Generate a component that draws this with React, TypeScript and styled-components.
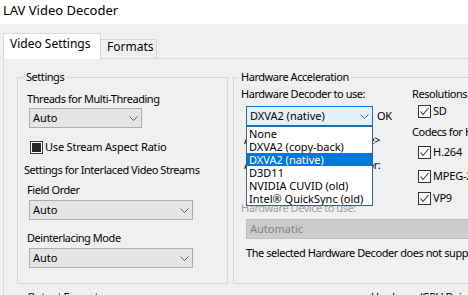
import React from "react";
import styled, { createGlobalStyle } from "styled-components";

const FONT = `"Noto Sans", "Noto Sans CJK SC", "Liberation Sans", sans-serif`;

const Global = createGlobalStyle`
  html, body { margin: 0; padding: 0; background: #f0f0f0; }
  body { font-family: ${FONT}; }
  * { box-sizing: border-box; }
`;

const Window = styled.div`
  width: 468px;
  height: 295px;
  overflow: hidden;
  background: #f0f0f0;
  font-family: ${FONT};
  font-size: 11px;
  letter-spacing: -0.45px;
  line-height: 16px;
  color: #000;
  display: flex;
  flex-direction: column;
`;

const TitleBar = styled.div`
  flex: none;
  height: 24px;
  background: #fff;
  display: flex;
  align-items: center;
  padding: 0 0 4px 3px;
  font-size: 13px;
  letter-spacing: 0;
`;

const TabArea = styled.div`
  flex: 1;
  display: flex;
  flex-direction: column;
  padding: 9px 0 0 3px;
`;

const TabStrip = styled.div`
  display: flex;
  align-items: flex-end;
  height: 26px;
  margin-bottom: -1px;
  position: relative;
  z-index: 1;
`;

const Tab = styled.div<{ $active?: boolean; $w: number }>`
  width: ${(p) => p.$w}px;
  height: ${(p) => (p.$active ? 26 : 20)}px;
  background: ${(p) => (p.$active ? "#ffffff" : "#f0f0f0")};
  border: 1px solid #d9d9d9;
  border-left: ${(p) => (p.$active ? "1px solid #d9d9d9" : "none")};
  border-bottom: ${(p) => (p.$active ? "none" : "1px solid #d9d9d9")};
  padding: ${(p) => (p.$active ? "2px 0 0 6px" : "0 0 0 6px")};
  line-height: ${(p) => (p.$active ? 16 : 14)}px;
  font-size: 12px;
  letter-spacing: 0;
  white-space: nowrap;
`;

const Panel = styled.div`
  flex: 1;
  border-top: 1px solid #d9d9d9;
  border-left: 1px solid #d9d9d9;
  background: #f0f0f0;
  padding: 10px 0 0 13px;
  display: grid;
  grid-template-columns: 211px 320px;
  column-gap: 5px;
  row-gap: 5px;
  align-content: start;
`;

const Group = styled.fieldset<{ $pl: number; $h: number }>`
  margin: 0;
  min-width: 0;
  height: ${(p) => p.$h}px;
  border: 1px solid #d7d7d7;
  padding: 6px 0 0 ${(p) => p.$pl}px;
  display: flex;
  flex-direction: column;
  align-items: flex-start;
`;

const Legend = styled.legend<{ $ml?: number }>`
  padding: 0 2px;
  margin-left: ${(p) => p.$ml ?? -2}px;
  line-height: 16px;
  white-space: nowrap;
`;

const Label = styled.div<{ $mt?: number; $ml?: number; $grey?: boolean }>`
  margin-top: ${(p) => p.$mt ?? 0}px;
  margin-left: ${(p) => p.$ml ?? 0}px;
  line-height: 16px;
  white-space: nowrap;
  color: ${(p) => (p.$grey ? "#a0a0a0" : "#000")};
`;

const ComboBox = styled.div<{
  $w: number;
  $mt?: number;
  $ml?: number;
  $focus?: boolean;
  $disabled?: boolean;
}>`
  position: relative;
  flex: none;
  width: ${(p) => p.$w}px;
  height: 20px;
  margin-top: ${(p) => p.$mt ?? 0}px;
  margin-left: ${(p) => p.$ml ?? 2}px;
  border: 1px solid
    ${(p) => (p.$focus ? "#0078d7" : p.$disabled ? "#bfbfbf" : "#adadad")};
  background: ${(p) =>
    p.$focus ? "#e5f1fb" : p.$disabled ? "#cccccc" : "#e5e5e5"};
  color: ${(p) => (p.$disabled ? "#838383" : "#000")};
  display: flex;
  align-items: center;
  justify-content: space-between;
  padding: 0 3px 0 3px;
  line-height: 16px;
  letter-spacing: 0;
  white-space: nowrap;
`;

const Chevron = styled.svg`
  flex: none;
  width: 9px;
  height: 5px;
  margin-top: 1px;
`;

const DropList = styled.div`
  position: absolute;
  left: -1px;
  top: 19px;
  width: 127px;
  background: #fff;
  border: 1px solid #3a628a;
  z-index: 5;
  display: flex;
  flex-direction: column;
`;

const Item = styled.div<{ $sel?: boolean }>`
  height: 13px;
  line-height: 13px;
  padding-left: 2px;
  background: ${(p) => (p.$sel ? "#0078d7" : "#fff")};
  color: ${(p) => (p.$sel ? "#fff" : "#000")};
  white-space: nowrap;
  overflow: hidden;
`;

const CheckRow = styled.div<{ $mt?: number; $ml?: number }>`
  display: flex;
  align-items: center;
  gap: 2px;
  height: 16px;
  margin-top: ${(p) => p.$mt ?? 0}px;
  margin-left: ${(p) => p.$ml ?? 0}px;
  letter-spacing: -0.2px;
  white-space: nowrap;
`;

const Box = styled.span`
  flex: none;
  width: 13px;
  height: 13px;
  border: 1px solid #333;
  background: #fff;
  display: inline-flex;
  align-items: center;
  justify-content: center;
`;

const Mixed = styled.span`
  width: 9px;
  height: 9px;
  background: #262626;
`;

const Row = styled.div`
  display: flex;
  align-items: center;
  gap: 4px;
`;

const InfoRow = styled.div<{ $mt: number }>`
  display: flex;
  justify-content: space-between;
  width: 136px;
  margin-top: ${(p) => p.$mt}px;
  margin-left: 3px;
  line-height: 16px;
  white-space: nowrap;
`;

const HwGrid = styled.div`
  display: grid;
  grid-template-columns: 171px 1fr;
  align-items: start;
  width: 100%;
`;

const Column = styled.div`
  display: flex;
  flex-direction: column;
  align-items: flex-start;
`;

const Note = styled.div`
  margin: 6px 0 0 5px;
  line-height: 16px;
  white-space: nowrap;
`;

const ChevronIcon = () => (
  <Chevron viewBox="0 0 9 5">
    <path d="M0.5 0.5 L4.5 4.5 L8.5 0.5" fill="none" stroke="#606060" strokeWidth="1" />
  </Chevron>
);

const Checkbox = ({ mixed }: { mixed?: boolean }) => (
  <Box>
    {mixed ? (
      <Mixed />
    ) : (
      <svg width="11" height="11" viewBox="0 0 11 11">
        <path d="M1.5 5.5 L4 8.5 L9.5 2" fill="none" stroke="#333" strokeWidth="1.1" />
      </svg>
    )}
  </Box>
);

const Combo = (props: {
  value: string;
  w: number;
  mt?: number;
  ml?: number;
  focus?: boolean;
  disabled?: boolean;
  children?: React.ReactNode;
}) => (
  <ComboBox
    $w={props.w}
    $mt={props.mt}
    $ml={props.ml}
    $focus={props.focus}
    $disabled={props.disabled}
  >
    <span>{props.value}</span>
    {!props.disabled && <ChevronIcon />}
    {props.children}
  </ComboBox>
);

const decoders = [
  "None",
  "DXVA2 (copy-back)",
  "DXVA2 (native)",
  "D3D11",
  "NVIDIA CUVID (old)",
  "Intel® QuickSync (old)",
];

export default function App() {
  return (
    <>
      <Global />
      <Window>
        <TitleBar>LAV Video Decoder</TitleBar>
        <TabArea>
          <TabStrip>
            <Tab $active $w={98}>Video Settings</Tab>
            <Tab $w={56}>Formats</Tab>
          </TabStrip>
          <Panel>
            <Group $pl={9} $h={215}>
              <Legend $ml={-3}>Settings</Legend>
              <Label>Threads for Multi-Threading</Label>
              <Combo value="Auto" w={113} mt={1} />
              <CheckRow $mt={11} $ml={3}>
                <Checkbox mixed />
                <span>Use Stream Aspect Ratio</span>
              </CheckRow>
              <Label $mt={7} $ml={-3}>Settings for Interlaced Video Streams</Label>
              <Label $mt={4}>Field Order</Label>
              <Combo value="Auto" w={164} mt={2} />
              <Label $mt={10}>Deinterlacing Mode</Label>
              <Combo value="Auto" w={164} mt={2} />
            </Group>

            <Group $pl={7} $h={215}>
              <Legend>Hardware Acceleration</Legend>
              <HwGrid>
                <Column>
                  <Label $mt={-5}>Hardware Decoder to use:</Label>
                  <Row>
                    <Combo value="DXVA2 (native)" w={127} mt={4} ml={5} focus>
                      <DropList>
                        {decoders.map((d) => (
                          <Item key={d} $sel={d === "DXVA2 (native)"}>
                            {d}
                          </Item>
                        ))}
                      </DropList>
                    </Combo>
                    <Label $mt={4}>OK</Label>
                  </Row>
                  <InfoRow $mt={6}>
                    <span>Active Decoder:</span>
                    <span>&lt;inactive&gt;</span>
                  </InfoRow>
                  <InfoRow $mt={9}>
                    <span>Active Hardware Accelerator:</span>
                  </InfoRow>
                  <Label $mt={27} $ml={0} $grey>
                    Hardware Device to use:
                  </Label>
                </Column>
                <Column>
                  <Label $mt={-5}>Resolutions</Label>
                  <CheckRow $mt={1} $ml={6}>
                    <Checkbox />
                    <span>SD</span>
                  </CheckRow>
                  <Label $mt={5}>Codecs for HW Decoding</Label>
                  <CheckRow $mt={4} $ml={6}>
                    <Checkbox />
                    <span>H.264</span>
                  </CheckRow>
                  <CheckRow $mt={8} $ml={6}>
                    <Checkbox />
                    <span>MPEG-2</span>
                  </CheckRow>
                  <CheckRow $mt={6} $ml={6}>
                    <Checkbox />
                    <span>VP9</span>
                  </CheckRow>
                </Column>
              </HwGrid>
              <Combo value="Automatic" w={260} mt={3} ml={5} disabled />
              <Note>The selected Hardware Decoder does not support device selection.</Note>
            </Group>

            <Group $pl={9} $h={60}>
              <Legend $ml={-2}>Output Formats</Legend>
            </Group>
            <Group $pl={137} $h={60}>
              <Legend>Hardware/GPU Deinterlacing</Legend>
            </Group>
          </Panel>
        </TabArea>
      </Window>
    </>
  );
}
